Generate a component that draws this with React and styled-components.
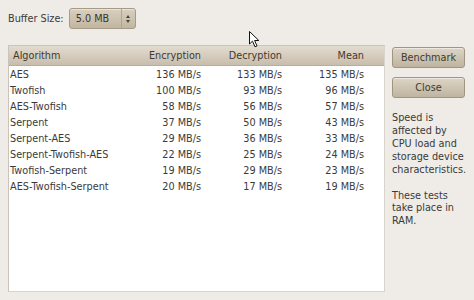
import React from "react";
import styled, { createGlobalStyle } from "styled-components";

const Global = createGlobalStyle`
  html, body { margin: 0; padding: 0; background: #efebe7; }
  body { font-family: "DejaVu Sans", "Liberation Sans", sans-serif; font-size: 10px; color: #3a3a3a; }
`;

const Window = styled.div`
  position: relative;
  width: 474px;
  height: 300px;
  box-sizing: border-box;
  padding: 8px 8px 8px 8px;
  display: flex;
  flex-direction: column;
  gap: 16px;
  background: #efebe7;
  overflow: hidden;
`;

const TopRow = styled.div`
  display: flex;
  align-items: center;
  gap: 5px;
  height: 21px;
`;

const Label = styled.span`
  font-size: 9.7px;
`;

const Spin = styled.div`
  display: flex;
  width: 67px;
  height: 21px;
  box-sizing: border-box;
  border: 1px solid #a59a86;
  border-radius: 3px;
  background: linear-gradient(#d8cfbf, #c2b6a1);
  box-shadow: inset 0 1px 0 rgba(255,255,255,0.45);
`;

const SpinValue = styled.div`
  flex: 1;
  padding-left: 6px;
  display: flex;
  align-items: center;
  font-size: 9.7px;
  color: #3a352c;
`;

const SpinArrows = styled.div`
  width: 13px;
  border-left: 1px solid #b2a68f;
  display: flex;
  flex-direction: column;
  align-items: center;
  justify-content: center;
  gap: 2px;
`;

const Tri = styled.span`
  width: 0;
  height: 0;
  border-left: 2.5px solid transparent;
  border-right: 2.5px solid transparent;
  ${(p) => (p.$up ? "border-bottom: 3px solid #4a4438;" : "border-top: 3px solid #4a4438;")}
`;

const Main = styled.div`
  display: flex;
  gap: 7px;
  height: 248px;
`;

const Frame = styled.div`
  width: 377px;
  box-sizing: border-box;
  border: 1px solid #c9c3b9;
  border-right-color: #d9d4cb;
  border-bottom-color: #d9d4cb;
  background: #ffffff;
  display: flex;
  flex-direction: column;
`;

const Grid = styled.div`
  display: grid;
  grid-template-columns: 120px 78px 81px 82px 1fr;
`;

const HeadCell = styled.div`
  height: 19px;
  display: flex;
  align-items: center;
  justify-content: ${(p) => (p.$left ? "flex-start" : "flex-end")};
  padding: ${(p) => (p.$left ? "0 0 0 4px" : "0 6px 0 0")};
  background: linear-gradient(#e2dbcf, #c9bead);
  border-bottom: 1px solid #b8ad99;
  color: #3f3a31;
  font-size: 9.7px;
  white-space: nowrap;
`;

const Cell = styled.div`
  height: 16px;
  display: flex;
  align-items: center;
  justify-content: ${(p) => (p.$left ? "flex-start" : "flex-end")};
  padding: ${(p) => (p.$left ? "0 0 0 1px" : "0 6px 0 0")};
  font-size: 9.7px;
  color: #3a3a3a;
  white-space: nowrap;
`;

const Side = styled.div`
  width: 73px;
  display: flex;
  flex-direction: column;
  padding-top: 2px;
`;

const Button = styled.button`
  height: 21px;
  box-sizing: border-box;
  border: 1px solid #a09581;
  border-radius: 3px;
  background: linear-gradient(#dcd4c6, #c0b49f);
  box-shadow: inset 0 1px 0 rgba(255,255,255,0.5);
  font-family: "DejaVu Sans", "Liberation Sans", sans-serif;
  font-size: 9.7px;
  color: #3f3a31;
  padding: 0;
  margin-bottom: 9px;
`;

const Note = styled.p`
  margin: 5px 0 0 0;
  font-size: 9.7px;
  line-height: 12.9px;
  color: #3a3a3a;
  & + & { margin-top: 13px; }
`;

const Cursor = styled.svg`
  position: absolute;
  left: 249px;
  top: 31px;
`;

const rows = [
  ["AES", "136 MB/s", "133 MB/s", "135 MB/s"],
  ["Twofish", "100 MB/s", "93 MB/s", "96 MB/s"],
  ["AES-Twofish", "58 MB/s", "56 MB/s", "57 MB/s"],
  ["Serpent", "37 MB/s", "50 MB/s", "43 MB/s"],
  ["Serpent-AES", "29 MB/s", "36 MB/s", "33 MB/s"],
  ["Serpent-Twofish-AES", "22 MB/s", "25 MB/s", "24 MB/s"],
  ["Twofish-Serpent", "19 MB/s", "29 MB/s", "23 MB/s"],
  ["AES-Twofish-Serpent", "20 MB/s", "17 MB/s", "19 MB/s"],
];

export default function App() {
  return (
    <>
      <Global />
      <Window>
        <TopRow>
          <Label>Buffer Size:</Label>
          <Spin>
            <SpinValue>5.0 MB</SpinValue>
            <SpinArrows>
              <Tri $up />
              <Tri />
            </SpinArrows>
          </Spin>
        </TopRow>
        <Main>
          <Frame>
            <Grid>
              <HeadCell $left>Algorithm</HeadCell>
              <HeadCell>Encryption</HeadCell>
              <HeadCell>Decryption</HeadCell>
              <HeadCell>Mean</HeadCell>
              <HeadCell />
              {rows.map((r) => (
                <React.Fragment key={r[0]}>
                  <Cell $left>{r[0]}</Cell>
                  <Cell>{r[1]}</Cell>
                  <Cell>{r[2]}</Cell>
                  <Cell>{r[3]}</Cell>
                  <Cell />
                </React.Fragment>
              ))}
            </Grid>
          </Frame>
          <Side>
            <Button>Benchmark</Button>
            <Button>Close</Button>
            <Note>
              Speed is<br />affected by<br />CPU load and<br />storage device<br />characteristics.
            </Note>
            <Note>
              These tests<br />take place in<br />RAM.
            </Note>
          </Side>
        </Main>
        <Cursor width="12" height="17" viewBox="0 0 12 17">
          <path d="M0.5 0.5 L0.5 13 L3.5 10.2 L6 15.8 L8 14.9 L5.6 9.5 L9.8 9.5 Z" fill="#fff" stroke="#111" strokeWidth="1" strokeLinejoin="round" />
        </Cursor>
      </Window>
    </>
  );
}
